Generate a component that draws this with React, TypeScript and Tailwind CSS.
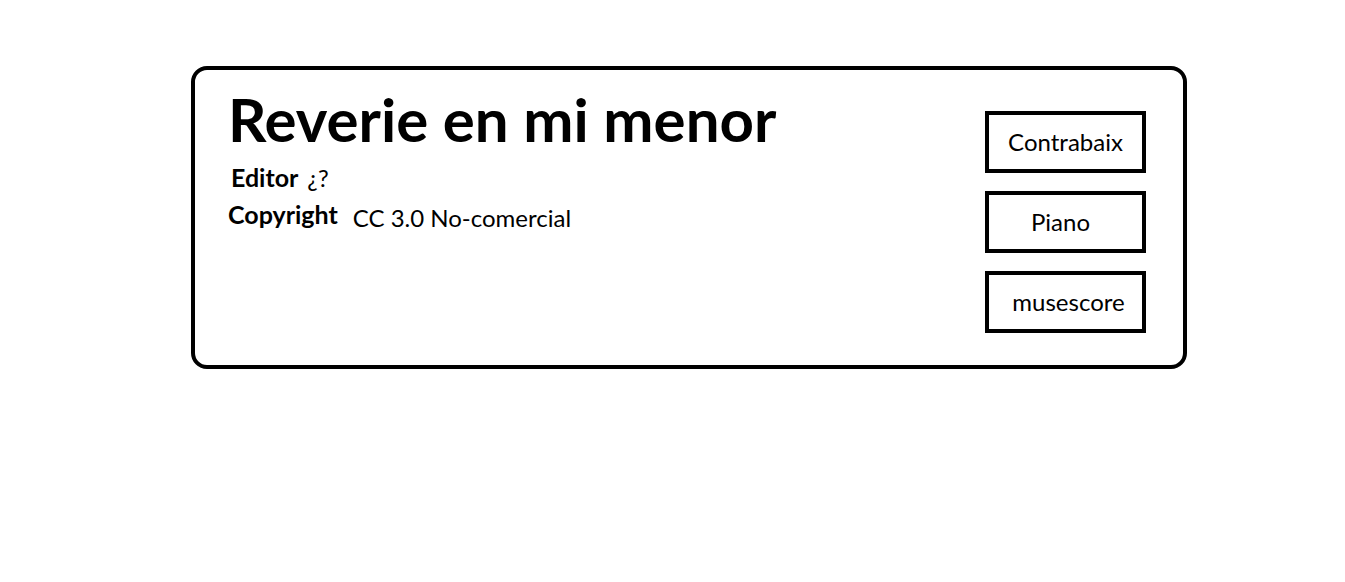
export default function App() {
  // pequeños desajustes horizontales del boceto original
  const parts = [
    { label: 'Contrabaix', shift: '' },
    { label: 'Piano', shift: 'pr-[10px]' },
    { label: 'musescore', shift: 'pl-[6px]' },
  ]

  return (
    <div className="min-h-[582px] w-full bg-white pt-[66px] font-['Lato','Liberation_Sans',sans-serif] text-black">
      <div className="ml-[191px] flex h-[303px] w-[996px] justify-between rounded-[16px] border-[4px] border-black pl-[33px] pr-[37px] pt-[13px]">
        <div className="flex flex-col">
          <h1 className="text-[60px] font-bold leading-[72px]">Reverie en mi menor</h1>
          <p className="mt-[7px] flex items-start gap-[9px] pl-[3px] leading-[30px]">
            <span className="text-[25px] font-bold">Editor</span>
            <span className="mt-[1px] text-[24px]">¿?</span>
          </p>
          <p className="mt-[6px] flex items-start gap-[15px] leading-[30px]">
            <span className="text-[25px] font-bold">Copyright</span>
            <span className="mt-[4px] text-[24px]">CC 3.0 No-comercial</span>
          </p>
        </div>
        <div className="mt-[28px] flex flex-col gap-[18px]">
          {parts.map((part) => (
            <div
              key={part.label}
              className={`flex h-[62px] w-[161px] items-center justify-center border-[4px] border-black text-[24px] ${part.shift}`}
            >
              {part.label}
            </div>
          ))}
        </div>
      </div>
    </div>
  )
}
